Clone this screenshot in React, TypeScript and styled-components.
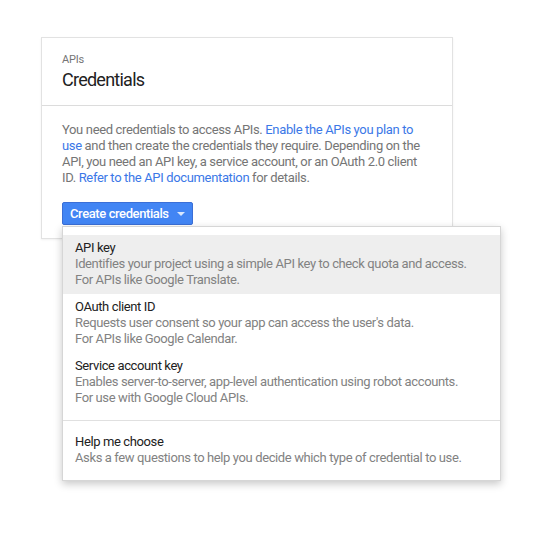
import React from "react";
import styled, { createGlobalStyle } from "styled-components";

const Global = createGlobalStyle`
  html, body { margin: 0; padding: 0; background: #fff; }
  body { font-family: Roboto, "Liberation Sans", Arial, sans-serif; -webkit-font-smoothing: antialiased; }
  * { box-sizing: border-box; }
`;

const Page = styled.div`
  padding: 37px 0 0 41px;
  width: 558px;
  height: 552px;
`;

const Card = styled.section`
  width: 412px;
  height: 202px;
  border: 1px solid #e2e2e2;
  background: #fff;
  box-shadow: 0 1px 2px rgba(0, 0, 0, 0.06);
  display: flex;
  flex-direction: column;
`;

const Header = styled.header`
  padding: 14px 20px 13px;
  border-bottom: 1px solid #dcdcdc;
`;

const Eyebrow = styled.div`
  font-size: 11px;
  line-height: 16px;
  letter-spacing: -0.2px;
  color: #757575;
`;

const Title = styled.h1`
  margin: 0;
  font-size: 18px;
  font-weight: 400;
  line-height: 24px;
  letter-spacing: -0.75px;
  color: #212121;
`;

const Body = styled.div`
  padding: 16px 20px 0;
`;

const Paragraph = styled.p`
  margin: 0;
  font-size: 13px;
  line-height: 16px;
  letter-spacing: -0.35px;
  color: #757575;
`;

const Link = styled.a`
  color: #3b78e7;
  text-decoration: none;
`;

const MenuAnchor = styled.div`
  position: relative;
  margin-top: 16px;
  display: inline-block;
  vertical-align: top;
`;

const Button = styled.button`
  display: inline-flex;
  align-items: center;
  gap: 8px;
  height: 23px;
  padding: 0 7px 0 7px;
  background: #4285f4;
  border: 1px solid #3b6fd6;
  border-radius: 2px;
  color: #fff;
  font-family: Roboto, "Liberation Sans", Arial, sans-serif;
  font-size: 13px;
  font-weight: 500;
  letter-spacing: -0.4px;
  cursor: pointer;
`;

const Caret = styled.span`
  width: 0;
  height: 0;
  border-left: 4px solid transparent;
  border-right: 4px solid transparent;
  border-top: 4px solid rgba(255, 255, 255, 0.8);
  margin-top: 1px;
`;

const Menu = styled.div`
  position: absolute;
  top: 24px;
  left: 0;
  width: 439px;
  padding: 8px 0;
  background: #fff;
  border: 1px solid #d6d6d6;
  box-shadow: 0 3px 8px rgba(0, 0, 0, 0.22);
  z-index: 2;
`;

const Item = styled.div<{ $active?: boolean }>`
  padding: 4px 12px 6px;
  background: ${(p) => (p.$active ? "#eeeeee" : "transparent")};
  letter-spacing: -0.38px;
  white-space: nowrap;
`;

const ItemTitle = styled.div`
  font-size: 13px;
  line-height: 17px;
  color: #212121;
`;

const ItemDesc = styled.div`
  font-size: 13px;
  line-height: 16px;
  color: #828282;
`;

const Divider = styled.div`
  height: 1px;
  background: #e0e0e0;
  margin: 8px 0;
`;

const items = [
  {
    title: "API key",
    lines: [
      "Identifies your project using a simple API key to check quota and access.",
      "For APIs like Google Translate.",
    ],
    active: true,
  },
  {
    title: "OAuth client ID",
    lines: [
      "Requests user consent so your app can access the user's data.",
      "For APIs like Google Calendar.",
    ],
  },
  {
    title: "Service account key",
    lines: [
      "Enables server-to-server, app-level authentication using robot accounts.",
      "For use with Google Cloud APIs.",
    ],
  },
];

export default function App() {
  return (
    <>
      <Global />
      <Page>
        <Card>
          <Header>
            <Eyebrow>APIs</Eyebrow>
            <Title>Credentials</Title>
          </Header>
          <Body>
            <Paragraph>
              You need credentials to access APIs. <Link href="#">Enable the APIs you plan to use</Link> and then
              create the credentials they require. Depending on the API, you need an API key, a service account, or an
              OAuth 2.0 client
              <br />
              ID. <Link href="#">Refer to the API documentation</Link> for details.
            </Paragraph>
            <MenuAnchor>
              <Button>
                Create credentials
                <Caret />
              </Button>
              <Menu>
                {items.map((it) => (
                  <Item key={it.title} $active={it.active}>
                    <ItemTitle>{it.title}</ItemTitle>
                    {it.lines.map((l) => (
                      <ItemDesc key={l}>{l}</ItemDesc>
                    ))}
                  </Item>
                ))}
                <Divider />
                <Item>
                  <ItemTitle>Help me choose</ItemTitle>
                  <ItemDesc>Asks a few questions to help you decide which type of credential to use.</ItemDesc>
                </Item>
              </Menu>
            </MenuAnchor>
          </Body>
        </Card>
      </Page>
    </>
  );
}
